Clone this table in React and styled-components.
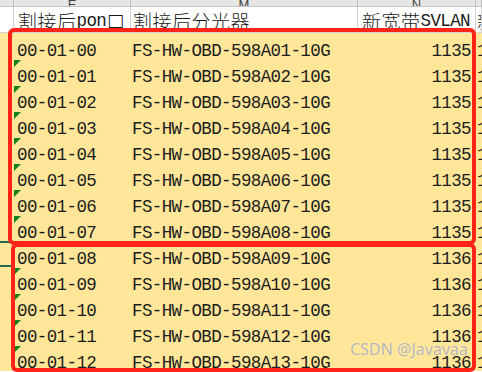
import React from 'react';
import styled, { createGlobalStyle } from 'styled-components';

const GlobalStyle = createGlobalStyle`
  html, body { margin: 0; padding: 0; background: #fff; overflow: hidden; }
`;

const COLS = '14px 117px 227px 118px 1fr';

const Sheet = styled.div`
  position: relative;
  width: 482px;
  height: 372px;
  overflow: hidden;
  font-family: "Liberation Mono", "Noto Sans CJK SC", monospace;
  font-size: 17.5px;
  letter-spacing: -0.6px;
  color: #1c1c1c;
`;

const LetterRow = styled.div`
  display: grid;
  grid-template-columns: ${COLS};
  height: 6px;
  background: #e6e6e6;
  border-bottom: 1px solid #c4c4c4;
  overflow: hidden;
`;

const Letter = styled.div`
  display: flex;
  justify-content: center;
  align-items: flex-end;
  padding-bottom: 3px;
  border-right: 1px solid #bdbdbd;
  font-family: "Liberation Sans", sans-serif;
  font-size: 13px;
  letter-spacing: 0;
  line-height: 10px;
  color: #444;
`;

const HeaderRow = styled.div`
  display: grid;
  grid-template-columns: ${COLS};
  height: 25px;
  background: #fff;
  border-bottom: 1px solid #d4d4d4;
`;

const HeadCell = styled.div`
  display: flex;
  align-items: flex-end;
  padding-left: ${(p) => p.$pad ?? 4}px;
  padding-bottom: 3px;
  line-height: 16px;
  white-space: nowrap;
  overflow: hidden;
  border-right: 1px solid #d4d4d4;
  color: #1a1a1a;
`;

const Han = styled.span`
  font-family: "Noto Sans CJK SC", sans-serif;
  font-size: 19px;
  letter-spacing: 0.5px;
  font-weight: 300;
`;

const DataRow = styled.div`
  display: grid;
  grid-template-columns: ${COLS};
  height: 26px;
  background: #ffe699;
`;

const Cell = styled.div`
  position: relative;
  display: flex;
  align-items: flex-end;
  justify-content: ${(p) => (p.$right ? 'flex-end' : 'flex-start')};
  padding-left: ${(p) => p.$pl ?? 0}px;
  padding-right: ${(p) => p.$pr ?? 0}px;
  line-height: 16px;
  white-space: nowrap;
  overflow: hidden;
  ${(p) =>
    p.$flag &&
    `&::before {
      content: '';
      position: absolute;
      top: 1px;
      left: 0;
      width: 0;
      height: 0;
      border-top: 7px solid #16801c;
      border-right: 7px solid transparent;
    }`}
`;

const EdgeCell = styled.div`
  border-right: 1px solid ${(p) => (p.$mark ? '#ffffff' : 'transparent')};
  ${(p) =>
    p.$mark &&
    `border-top: 2px solid #1e6a55; border-bottom: 2px solid #1e6a55;`}
`;

const RedBox = styled.div`
  position: absolute;
  left: ${(p) => p.$l}px;
  top: ${(p) => p.$t}px;
  width: ${(p) => p.$w}px;
  height: ${(p) => p.$h}px;
  box-sizing: border-box;
  border: 4px solid #ff2418;
  border-radius: 6px;
  pointer-events: none;
`;

const Watermark = styled.div`
  position: absolute;
  right: 14px;
  bottom: 12px;
  font-family: "Noto Sans", "Liberation Sans", sans-serif;
  font-size: 16px;
  letter-spacing: 0;
  color: rgba(150, 150, 150, 0.7);
  text-shadow: 0 0 1px rgba(255, 255, 255, 0.9);
`;

const pad = (n) => String(n).padStart(2, '0');
const rows = Array.from({ length: 13 }, (_, i) => ({
  pon: `00-01-${pad(i)}`,
  sp: `FS-HW-OBD-598A${pad(i + 1)}-10G`,
  vlan: i < 8 ? 1135 : 1136,
}));

export default function App() {
  return (
    <>
      <GlobalStyle />
      <Sheet>
        <LetterRow>
          <Letter />
          <Letter>E</Letter>
          <Letter>M</Letter>
          <Letter>N</Letter>
          <Letter />
        </LetterRow>
        <HeaderRow>
          <HeadCell $pad={0} />
          <HeadCell $pad={4}>
            <Han>割接后</Han>pon<Han>口</Han>
          </HeadCell>
          <HeadCell $pad={2}>
            <Han>割接后分光器</Han>
          </HeadCell>
          <HeadCell $pad={4}>
            <Han>新宽带</Han>SVLAN
          </HeadCell>
          <HeadCell $pad={1}>
            <Han>新宽带</Han>
          </HeadCell>
        </HeaderRow>
        {rows.map((r, i) => (
          <DataRow key={r.pon}>
            <EdgeCell $mark={i === 8} />
            <Cell $pl={3} $flag={i > 0}>{r.pon}</Cell>
            <Cell $pl={1}>{r.sp}</Cell>
            <Cell $right $pr={5}>{r.vlan}</Cell>
            <Cell $pl={1}>{r.vlan}</Cell>
          </DataRow>
        ))}
        <RedBox $l={8} $t={28} $w={468} $h={217} />
        <RedBox $l={11} $t={243} $w={465} $h={129} />
        <Watermark>CSDN @Javavaa</Watermark>
      </Sheet>
    </>
  );
}
